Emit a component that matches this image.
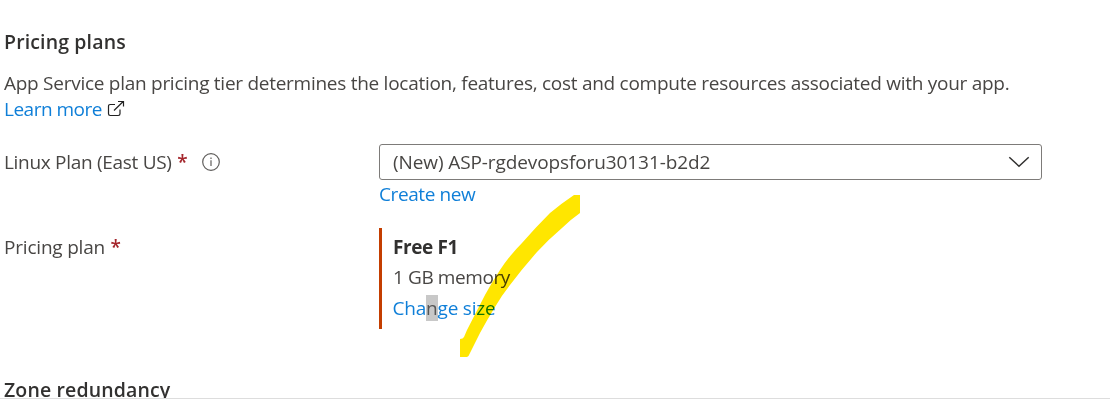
<main>
  <h2 class="w-title"><span>Pricing plans</span></h2>
  <p class="desc">
    <span class="w-desc">App Service plan pricing tier determines the location, features, cost and compute resources associated with your app.</span><br />
    <a href="#learn" class="w-learn">Learn more</a><svg class="ext" width="18" height="18" viewBox="0 0 18 18"><path d="M8 4.500H3.200Q1.500 4.500 1.500 6.200V13.800Q1.500 15.500 3.200 15.500H11.300Q13 15.500 13 13.800V9.500M7 10.500L16.200 1.500M11 1.500H16.500V6.500" /></svg>
  </p>

  <div class="row plan">
    <div class="label"><span class="w-linux">Linux Plan (East US)</span><b class="star">*</b>
      <svg class="info" width="20" height="20" viewBox="0 0 20 20"><circle cx="10" cy="10" r="8.300" /><path d="M10 8.300V14M10 5.400V6.900" /></svg>
    </div>
    <div class="field">
      <div class="select"><span class="w-asp">(New) ASP-rgdevopsforu30131-b2d2</span>
        <svg width="22" height="12" viewBox="0 0 22 12"><path d="M1.300 1.200L11 10.200L20.700 1.200" /></svg>
      </div>
      <a href="#new" class="create"><span class="w-create">Create new</span></a>
    </div>
  </div>

  <div class="row pricing">
    <div class="label"><span class="w-pp">Pricing plan</span><b class="star">*</b></div>
    <div class="card">
      <strong class="w-free">Free F1</strong>
      <span class="w-mem">1 GB memory</span>
      <a href="#size" class="w-size">Cha<mark>n</mark>ge size</a>
      <svg class="stroke" width="124" height="166" viewBox="0 0 124 166"><path d="M116 1H122V19Q112 26 104 34Q91 45 79 58Q64 75 52 91Q44 101 37 113Q29 126 22 139L12 159Q11 162 9 163H2V145Q5 145 6 143L9 136L27 101Q34 88 42 76Q52 61 64 49Q77 34 92 19Q104 9 116 1Z" /></svg>
    </div>
  </div>

  <div class="zone"><h2><span class="w-zone">Zone redundancy</span></h2></div>
</main>

<style>
  :global(body) { background: #fff; }
  main {
    box-sizing: border-box;
    height: 409px;
    padding: 29px 0 0 4px;
    overflow: hidden;
    font: 19px/26px "Open Sans", "Noto Sans", sans-serif;
    color: #484644;
    white-space: nowrap;
  }
  h2 { margin: 0; font-size: 19.5px; line-height: 26px; font-weight: 600; color: #323130; letter-spacing: 0.14px; }
  a { color: #0f7fd8; text-decoration: none; }
  .desc { margin: 15px 0 0; height: 52px; }
  .w-desc { letter-spacing: -0.27px; }
  .w-learn { letter-spacing: -0.5px; }
  .w-linux { letter-spacing: -0.3px; }
  .w-asp { letter-spacing: -0.1px; }
  .w-create { letter-spacing: -0.4px; }
  .w-pp { letter-spacing: -0.2px; }
  .w-free { letter-spacing: -0.4px; }
  .w-mem { letter-spacing: -0.4px; margin-top: -1px; }
  .w-size { letter-spacing: -0.2px; margin: 1px 0 0 -0.5px; }
  .ext { margin-left: 5.5px; vertical-align: -2px; fill: none; stroke: #222; stroke-width: 1.2; }
  .row { display: grid; grid-template-columns: 375px 663px; }
  .plan { margin-top: 22px; height: 84px; }
  .label { display: flex; height: 36px; align-items: center; }
  .pricing .label { height: 38px; }
  .star { margin-left: 5.5px; color: #a4262c; font-weight: 600; }
  .info { margin-left: 13.5px; fill: none; stroke: #605e5c; stroke-width: 1.2; }
  .select {
    box-sizing: border-box; height: 36px; padding: 0 11px 0 13px;
    display: flex; align-items: center; justify-content: space-between;
    border: 1px solid #7d7b79; border-radius: 3px;
  }
  .select svg { fill: none; stroke: #323130; stroke-width: 1.5; }
  .create { display: block; margin-top: 1px; }
  .card {
    position: relative; box-sizing: border-box; height: 101px;
    padding: 4px 0 0 11px; border-left: 3px solid #c43e00;
    display: flex; flex-direction: column; align-items: flex-start; line-height: 30.5px;
  }
  .card strong { color: #323130; font-weight: 700; }
  mark { background: #c8c8c8; color: #555; }
  .stroke { position: absolute; left: 76px; top: -34px; fill: #ffe600; mix-blend-mode: multiply; }
  .zone { box-sizing: border-box; margin: 47px 0 0 -4px; padding: 1px 0 0 4px; height: 23px; overflow: hidden; border-bottom: 1px solid #ddd; }
</style>
